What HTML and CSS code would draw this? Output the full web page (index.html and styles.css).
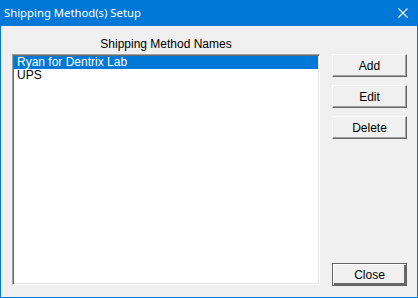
FILE: index.html
```html
<!DOCTYPE html>
<html lang="en">
<head>
    <meta charset="UTF-8">
    <title>Shipping Method(s) Setup</title>
    <link rel="stylesheet" href="styles.css">
</head>
<body>

    <div class="window">
        <!-- タイトルバー -->
        <div class="titlebar">
            <span class="title">Shipping Method(s) Setup</span>
            <span class="close-x">
                <svg width="10" height="10" viewBox="0 0 10 10">
                    <path d="M0.5 0.5 L9.5 9.5 M9.5 0.5 L0.5 9.5" stroke="#fff" stroke-width="1.1" fill="none"/>
                </svg>
            </span>
        </div>

        <div class="content">
            <!-- 一覧 -->
            <div class="list-col">
                <div class="list-label">Shipping Method Names</div>
                <div class="listbox">
                    <div class="item selected">Ryan for Dentrix Lab</div>
                    <div class="item">UPS</div>
                </div>
            </div>

            <!-- ボタン -->
            <div class="button-col">
                <button class="btn">Add</button>
                <button class="btn">Edit</button>
                <button class="btn">Delete</button>
                <button class="btn default close-btn">Close</button>
            </div>
        </div>
    </div>

</body>
</html>
```

FILE: styles.css
```css
/* 基本のスタイル */
body {
    margin: 0;
    padding: 0;
    font-family: "Liberation Sans", Arial, sans-serif;
    font-size: 12px;
    background-color: #f0f0f0;
}

.window {
    width: 418px;
    height: 298px;
    box-sizing: border-box;
    border: 1px solid #0078d7;
    border-top: none;
    background-color: #f0f0f0;
    display: flex;
    flex-direction: column;
}

.titlebar {
    height: 26px;
    background-color: #0078d7;
    color: white;
    display: flex;
    align-items: center;
    justify-content: space-between;
    padding: 0 9px 0 3px;
    flex-shrink: 0;
}

.title {
    font-family: "Noto Sans", "DejaVu Sans", sans-serif;
    font-size: 11.3px;
    padding-bottom: 1px;
}

.close-x {
    display: flex;
    width: 10px;
    height: 10px;
    margin-bottom: 1px;
}

.content {
    flex: 1;
    display: flex;
    padding: 11px 10px 11px 11px;
    gap: 12px;
}

.list-col {
    flex: 1;
    display: flex;
    flex-direction: column;
}

.list-label {
    text-align: center;
    line-height: 14px;
    margin-bottom: 3px;
}

/* くぼんだ枠 */
.listbox {
    flex: 1;
    background-color: white;
    border-top: 1px solid #a0a0a0;
    border-left: 1px solid #a0a0a0;
    border-right: 1px solid #ffffff;
    border-bottom: 1px solid #ffffff;
    box-shadow: inset 1px 1px 0 #696969, inset -1px -1px 0 #e3e3e3;
    padding: 1px;
    margin-bottom: 1px;
}

.item {
    height: 13px;
    line-height: 13px;
    padding-left: 3px;
    white-space: nowrap;
}

.item.selected {
    background-color: #0078d7;
    color: white;
}

.button-col {
    width: 75px;
    display: flex;
    flex-direction: column;
    padding-top: 17px;
    gap: 8px;
}

.btn {
    height: 23px;
    font-family: "Liberation Sans", Arial, sans-serif;
    font-size: 12px;
    color: black;
    background-color: #f0f0f0;
    border-top: 1px solid #ffffff;
    border-left: 1px solid #ffffff;
    border-right: 1px solid #696969;
    border-bottom: 1px solid #696969;
    box-shadow: inset -1px -1px 0 #a0a0a0;
    padding: 0;
    border-radius: 0;
}

.btn.default {
    border: 1px solid #646464;
    box-shadow: inset 1px 1px 0 #ffffff, inset -2px -2px 0 #696969, inset -1px -1px 0 #a0a0a0;
}

.close-btn {
    margin-top: auto;
}
```
